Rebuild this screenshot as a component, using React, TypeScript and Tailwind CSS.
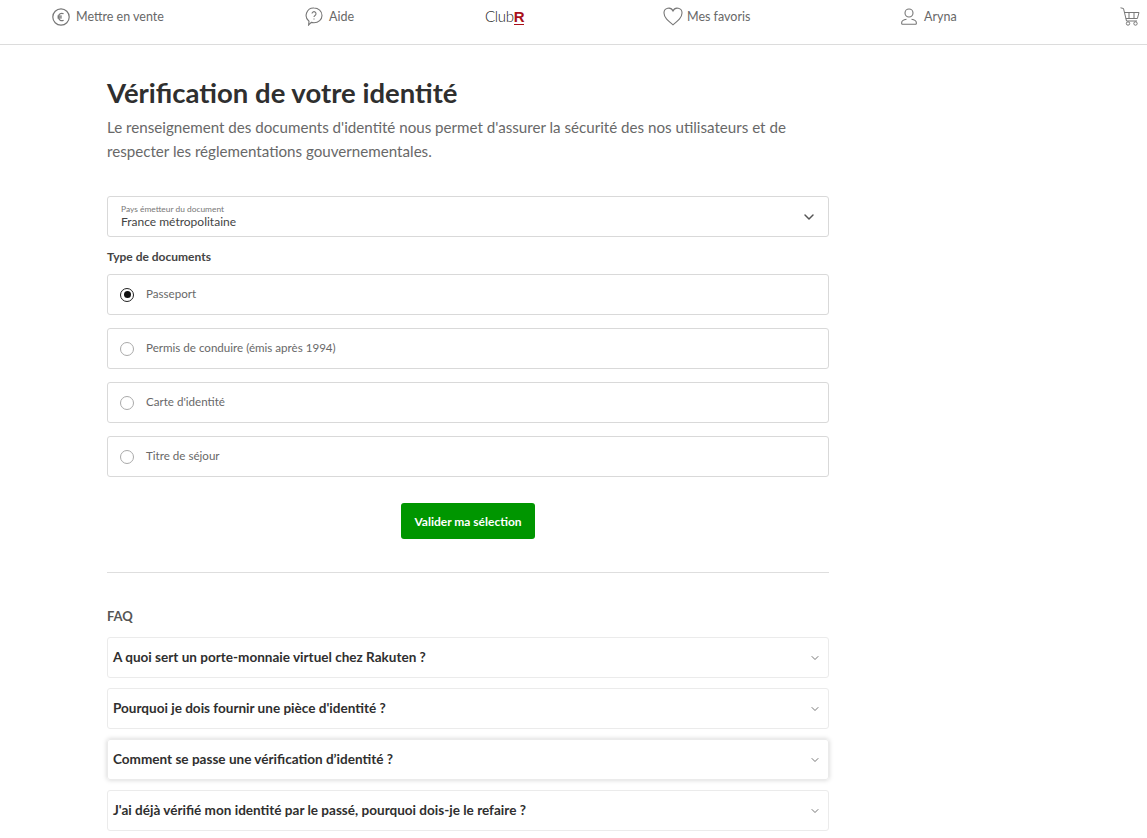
import { ChevronDown } from "lucide-react"

const documents = [
  { label: "Passeport", checked: true },
  { label: "Permis de conduire (émis après 1994)", checked: false },
  { label: "Carte d'identité", checked: false },
  { label: "Titre de séjour", checked: false },
]

const faq = [
  { question: "A quoi sert un porte-monnaie virtuel chez Rakuten ?", hover: false },
  { question: "Pourquoi je dois fournir une pièce d'identité ?", hover: false },
  { question: "Comment se passe une vérification d’identité ?", hover: true },
  { question: "J'ai déjà vérifié mon identité par le passé, pourquoi dois-je le refaire ?", hover: false },
]

function EuroIcon() {
  return (
    <svg width="18" height="18" viewBox="0 0 18 18" fill="none" stroke="#777" strokeWidth="1.2">
      <circle cx="9" cy="9" r="8.2" />
      <path d="M11.600 5.800a3.300 3.300 0 0 0-5 3.200 3.300 3.300 0 0 0 5 3.200M5.400 8.200h4.400M5.400 9.800h4.400" />
    </svg>
  )
}

function HelpIcon() {
  return (
    <svg width="18" height="19" viewBox="0 0 18 19" fill="none" stroke="#777" strokeWidth="1.1">
      <path d="M9 1a8 7.400 0 0 1 0 14.800c-1 0-1.900-.2-2.700-.4L3.600 18l.4-3.800A7.400 7.400 0 0 1 9 1z" />
      <path d="M7 6.600a2 2 0 1 1 3 1.800c-.7.400-1 .8-1 1.600M9 11.400v1.100" />
    </svg>
  )
}

function HeartIcon() {
  return (
    <svg width="20" height="19" viewBox="0 0 20 19" fill="none" stroke="#777" strokeWidth="1.1">
      <path d="M10 17.800C5 13.600 1 10.400 1 6a4.700 4.700 0 0 1 9-2 4.700 4.700 0 0 1 9 2c0 4.400-4 7.600-9 11.800z" />
    </svg>
  )
}

function UserIcon() {
  return (
    <svg width="16" height="17" viewBox="0 0 16 17" fill="none" stroke="#777" strokeWidth="1.1">
      <circle cx="8" cy="5" r="4" />
      <path d="M.7 16.300v-1.800c0-1.800 3-3 4.800-3.300M15.300 16.300v-1.800c0-1.800-3-3-4.800-3.300M.7 16.300h14.600" />
    </svg>
  )
}

function CartIcon() {
  return (
    <svg width="20" height="19" viewBox="0 0 20 19" fill="none" stroke="#777" strokeWidth="1">
      <path d="M.5 .8l3 .7 3 12.500h10.500M4.200 5.500H19l-1.600 6H5.800M9 5.500v6M14 5.500v6" />
      <circle cx="8" cy="16.500" r="1.700" />
      <circle cx="15.500" cy="16.500" r="1.700" />
    </svg>
  )
}

function NavItem({ width, gap, icon, label }: { width: string; gap: string; icon: React.ReactNode; label: string }) {
  return (
    <div className={`flex items-center shrink-0 ${width} ${gap}`}>
      {icon}
      <span className="pt-[2px] text-[12.500px] text-[#686868]">{label}</span>
    </div>
  )
}

export default function App() {
  return (
    <div className="h-[838px] overflow-hidden bg-white font-['Lato',sans-serif] text-[#333]">
      <header className="flex items-center h-[45px] pb-[11px] pl-[52px] border-b border-[#dcdcdc] overflow-hidden">
        <NavItem width="w-[253px]" gap="gap-[6px]" icon={<EuroIcon />} label="Mettre en vente" />
        <NavItem width="w-[180px]" gap="gap-[6px]" icon={<HelpIcon />} label="Aide" />
        <div className="w-[178px] shrink-0 flex items-center text-[15px] font-light tracking-[-0.3px] text-[#222]">
          Club
          <span className="font-['Liberation_Sans',sans-serif] font-bold text-[15px] leading-[15px] text-[#a8101a] border-b border-[#a8101a]">R</span>
        </div>
        <NavItem width="w-[238px]" gap="gap-[4px]" icon={<HeartIcon />} label="Mes favoris" />
        <NavItem width="w-[219px]" gap="gap-[7px]" icon={<UserIcon />} label="Aryna" />
        <div className="shrink-0">
          <CartIcon />
        </div>
      </header>

      <main className="w-[722px] ml-[107px]">
        <h1 className="mt-[32px] text-[27.500px] leading-[32px] font-bold text-[#2f2f2f]">Vérification de votre identité</h1>
        <p className="mt-[6px] text-[15.150px] leading-[24px] text-[#686868]">
          Le renseignement des documents d'identité nous permet d'assurer la sécurité des nos utilisateurs et de respecter les réglementations gouvernementales.
        </p>

        <div className="mt-[33px] h-[41px] flex items-center justify-between pl-[13px] pr-[11px] border border-[#d9d9d9] rounded-[3px]">
          <div className="flex flex-col mb-[2px]">
            <span className="text-[8.400px] leading-[10px] mt-[2px] text-[#777]">Pays émetteur du document</span>
            <span className="text-[12px] leading-[16px] text-[#444]">France métropolitaine</span>
          </div>
          <ChevronDown size={16} strokeWidth={2.2} className="text-[#555]" />
        </div>

        <h2 className="mt-[12px] text-[12px] leading-[16px] font-bold text-[#444]">Type de documents</h2>

        <div className="mt-[9px] flex flex-col gap-[13px]">
          {documents.map((doc) => (
            <label key={doc.label} className="h-[41px] flex items-center gap-[12px] pl-[12px] border border-[#d9d9d9] rounded-[3px]">
              {doc.checked ? (
                <span className="w-[12px] h-[12px] box-content rounded-full border border-[#222] flex items-center justify-center">
                  <span className="w-[7px] h-[7px] rounded-full bg-[#111]" />
                </span>
              ) : (
                <span className="w-[12px] h-[12px] box-content rounded-full border border-[#aaa]" />
              )}
              <span className="pb-[1px] text-[11.600px] text-[#686868]">{doc.label}</span>
            </label>
          ))}
        </div>

        <div className="mt-[26px] flex justify-center">
          <button className="w-[134px] h-[36px] pt-[1px] rounded-[3px] bg-[#009600] text-white text-[12px] font-bold">Valider ma sélection</button>
        </div>

        <hr className="mt-[33px] border-t border-[#dedede]" />

        <h2 className="mt-[35px] text-[13px] leading-[16px] font-bold text-[#555]">FAQ</h2>

        <div className="mt-[13px] flex flex-col gap-[10px]">
          {faq.map((item) => (
            <div
              key={item.question}
              className={`h-[41px] flex items-center justify-between pl-[5px] pr-[7px] border border-[#ebebeb] rounded-[3px] ${item.hover ? "shadow-[0_0_5px_rgba(0,0,0,0.18)]" : ""}`}
            >
              <span className="text-[13.550px] font-bold text-[#2f2f2f]">{item.question}</span>
              <ChevronDown size={12} strokeWidth={1.800} className="text-[#666]" />
            </div>
          ))}
        </div>
      </main>
    </div>
  )
}
